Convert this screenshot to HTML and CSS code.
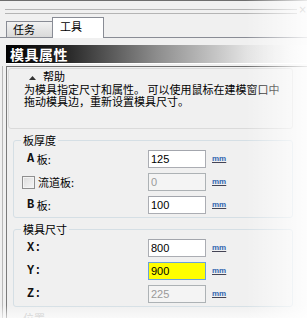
FILE: index.html
```html
<!DOCTYPE html>
<html lang="zh">
<head>
<meta charset="utf-8">
<title>模具属性</title>
<link rel="stylesheet" href="styles.css">
</head>
<body>
<div class="window">
  <div class="header">
    <div class="grip"></div>
    <span class="close">×</span>
  </div>
  <div class="tabs">
    <div class="tab">任务</div>
    <div class="tab active">工具</div>
  </div>
  <div class="title">模具属性</div>
  <div class="panel">
    <div class="content">
      <div class="help">
        <div class="help-head">
          <svg class="arrow" width="7" height="4" viewBox="0 0 7 4"><polygon points="0,4 3.5,0 7,4" fill="#333"/></svg>
          <span>帮助</span>
        </div>
        <p class="help-text">为模具指定尺寸和属性。 可以使用鼠标在建模窗口中<br>拖动模具边，重新设置模具尺寸。</p>
      </div>

      <fieldset class="group">
        <legend>板厚度</legend>
        <div class="row">
          <label class="lbl"><span class="latin">A</span> 板:</label>
          <input class="field" type="text" value="125">
          <span class="unit">mm</span>
        </div>
        <div class="row">
          <label class="lbl check"><span class="box"></span>流道板:</label>
          <input class="field" type="text" value="0" disabled>
          <span class="unit">mm</span>
        </div>
        <div class="row">
          <label class="lbl"><span class="latin">B</span> 板:</label>
          <input class="field" type="text" value="100">
          <span class="unit">mm</span>
        </div>
      </fieldset>

      <fieldset class="group">
        <legend>模具尺寸</legend>
        <div class="row">
          <label class="lbl"><span class="latin">X:</span></label>
          <input class="field" type="text" value="800">
          <span class="unit">mm</span>
        </div>
        <div class="row">
          <label class="lbl"><span class="latin">Y:</span></label>
          <input class="field hot" type="text" value="900">
          <span class="unit">mm</span>
        </div>
        <div class="row">
          <label class="lbl"><span class="latin">Z:</span></label>
          <input class="field" type="text" value="225" disabled>
          <span class="unit">mm</span>
        </div>
      </fieldset>

      <fieldset class="group faded">
        <legend>位置</legend>
        <div class="row"></div>
      </fieldset>
    </div>
  </div>
  <div class="fade"></div>
</div>
</body>
</html>
```

FILE: styles.css
```css
html, body {
  margin: 0;
  padding: 0;
}
body {
  width: 307px;
  height: 318px;
  overflow: hidden;
  background: #f0f0f0;
  font-family: "Noto Sans CJK SC", "DejaVu Sans", sans-serif;
  font-size: 11px;
  color: #000;
}
.window {
  position: relative;
  width: 307px;
  height: 318px;
  overflow: hidden;
}
.header {
  position: relative;
  height: 16px;
  border-top: 1px solid #6d6d6d;
  display: flex;
  align-items: flex-start;
}
.grip {
  margin: 8px 0 0 5px;
  width: 293px;
  height: 3px;
  border-top: 1px solid #b4b4b4;
  border-bottom: 1px solid #b4b4b4;
}
.close {
  margin: 3px 0 0 2px;
  font-family: "DejaVu Sans", sans-serif;
  font-size: 10px;
  line-height: 12px;
  color: #777;
}
.tabs {
  height: 20px;
  border-bottom: 1px solid #898c95;
  display: flex;
  align-items: flex-end;
  padding-left: 6px;
}
.tab {
  box-sizing: border-box;
  height: 16px;
  width: 47px;
  border: 1px solid #898c95;
  border-bottom: none;
  background: linear-gradient(#f2f2f2, #d9d9d9);
  padding-left: 6px;
  line-height: 15px;
  font-size: 11px;
}
.tab.active {
  height: 21px;
  width: 52px;
  margin-bottom: -1px;
  margin-left: -1px;
  background: #fff;
  padding-left: 7px;
  line-height: 17px;
}
.title {
  margin: 7px 0 0 6px;
  height: 18px;
  border-bottom: 1px solid #fff;
  background: linear-gradient(to right, #000 0px, #262626 60px, #8c8c8c 150px, #e2e2e2 240px, #f6f6f6 301px);
  color: #fff;
  font-weight: bold;
  font-size: 14px;
  line-height: 18px;
  padding-left: 4px;
  letter-spacing: 0.5px;
}
.panel {
  margin: 2px 0 0 2px;
  border-left: 1px solid #b8b8b8;
  padding-left: 3px;
  height: 260px;
}
.content {
  border-top: 1px solid #6e6e6e;
  border-left: 1px solid #7a7a7a;
  padding: 1px 0 0 1px;
  height: 100%;
}
.help {
  box-sizing: border-box;
  width: 285px;
  height: 61px;
  border: 1px solid #dadada;
  border-radius: 3px;
  background: #f0f0f0;
}
.help-head {
  height: 13px;
  margin-top: 1px;
  display: flex;
  align-items: center;
  padding-left: 20px;
  line-height: 13px;
}
.arrow {
  margin-right: 7px;
  margin-top: 2px;
}
.help-text {
  margin: 0;
  padding-left: 15px;
  line-height: 12px;
  font-size: 11px;
}
.group {
  margin: 4px 0 0 5px;
  width: 280px;
  box-sizing: border-box;
  border: 1px solid #d5dfe5;
  border-radius: 3px;
  padding: 3px 0 3px 0;
  min-width: 0;
}
.group + .group {
  margin-top: 4px;
}
.group legend {
  margin-left: 7px;
  padding: 0 2px;
  line-height: 14px;
  font-size: 11px;
}
.group.faded legend {
  color: #b5b5b5;
}
.row {
  display: grid;
  grid-template-columns: 128px 58px auto;
  align-items: center;
  column-gap: 6px;
  height: 18px;
}
.row + .row {
  margin-top: 5px;
}
.lbl {
  padding-left: 13px;
  display: flex;
  align-items: center;
  white-space: pre;
  font-size: 11px;
}
.lbl.check {
  padding-left: 8px;
}
.latin {
  font-family: "Liberation Mono", "DejaVu Sans Mono", monospace;
  font-size: 12px;
  font-weight: bold;
  color: #111;
}
.box {
  box-sizing: border-box;
  width: 13px;
  height: 13px;
  border: 1px solid #8f8f8f;
  background: linear-gradient(135deg, #dcdcdc, #f6f6f6);
  box-shadow: inset 0 0 0 1px #f4f4f4;
  margin-right: 3px;
}
.field {
  box-sizing: border-box;
  width: 58px;
  height: 18px;
  margin: 0;
  border: 1px solid #abadb3;
  border-top-color: #a3a6ad;
  background: #fff;
  padding: 0 2px;
  font-family: "Liberation Sans", Arial, sans-serif;
  font-size: 11px;
  color: #000;
  outline: none;
}
.field:disabled {
  background: #f4f4f4;
  border-color: #adb2b5;
  color: #9a9a9a;
}
.field.hot {
  background: #ffff00;
  border-color: #6aa2dc;
}
.unit {
  font-family: "Liberation Sans", Arial, sans-serif;
  font-size: 8px;
  font-weight: bold;
  color: #3468b0;
  text-decoration: underline;
  text-decoration-color: #445;
  line-height: 8px;
}
.fade {
  position: absolute;
  inset: 0;
  pointer-events: none;
  background:
    linear-gradient(to right, rgba(255,255,255,0) 80%, rgba(255,255,255,0.85) 100%),
    linear-gradient(to bottom, rgba(255,255,255,0) 96%, rgba(255,255,255,0.6) 100%);
}
```
